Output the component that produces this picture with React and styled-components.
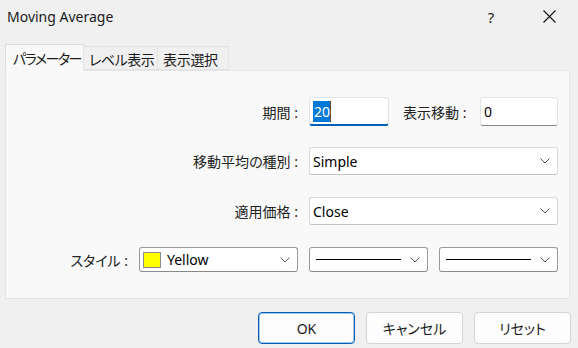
import React from 'react';
import styled, { createGlobalStyle } from 'styled-components';

const GlobalStyle = createGlobalStyle`
  html, body {
    margin: 0;
    padding: 0;
  }
  body {
    width: 578px;
    height: 348px;
    overflow: hidden;
    background: #f0f0f0;
    font-family: "Noto Sans", "Noto Sans CJK JP", sans-serif;
    font-size: 14px;
    color: #222;
    font-feature-settings: "palt";
  }
`;

const Window = styled.div`
  width: 578px;
  height: 348px;
  display: flex;
  flex-direction: column;
  background: #f0f0f0;
`;

const TitleBar = styled.div`
  height: 33px;
  display: flex;
  align-items: center;
  padding-left: 7px;
`;

const Title = styled.div`
  flex: 1;
  font-size: 14px;
  color: #1a1a1a;
`;

const TitleButton = styled.div`
  width: 58px;
  height: 33px;
  display: flex;
  align-items: center;
  justify-content: center;
  font-size: 15px;
  color: #222;
`;

const TabStrip = styled.div`
  display: flex;
  align-items: flex-end;
  margin-top: 11px;
  padding-left: 5px;
  position: relative;
  z-index: 1;
`;

const Tab = styled.div`
  width: ${(p) => p.$w}px;
  height: ${(p) => (p.$active ? 27 : 24)}px;
  box-sizing: border-box;
  display: flex;
  align-items: center;
  padding-left: ${(p) => (p.$active ? 7 : 5)}px;
  padding-top: ${(p) => (p.$active ? 0 : 1)}px;
  background: ${(p) => (p.$active ? '#f9f9f9' : '#f0f0f0')};
  border: 1px solid ${(p) => (p.$active ? '#dcdcdc' : '#e3e3e3')};
  border-bottom: ${(p) => (p.$active ? '1px solid #f9f9f9' : '1px solid #e3e3e3')};
  margin-bottom: ${(p) => (p.$active ? -1 : 0)}px;
  margin-left: ${(p) => (p.$first ? 0 : -1)}px;
  letter-spacing: ${(p) => p.$ls || 0}px;
  white-space: nowrap;
  overflow: hidden;
  color: #1a1a1a;
`;

const Panel = styled.div`
  margin: 0 8px 0 5px;
  height: 229px;
  box-sizing: border-box;
  background: #f9f9f9;
  border: 1px solid #e5e5e5;
  padding-top: 26px;
  display: flex;
  flex-direction: column;
`;

const Row = styled.div`
  display: flex;
  align-items: center;
  gap: 11px;
  margin-top: ${(p) => p.$top || 0}px;
`;

const Label = styled.div`
  width: ${(p) => p.$w}px;
  text-align: right;
  white-space: nowrap;
`;

const InlineLabel = styled.div`
  width: 66px;
  margin-left: 3px;
  white-space: nowrap;
`;

const TextBox = styled.div`
  width: ${(p) => p.$w}px;
  height: 29px;
  box-sizing: border-box;
  background: #fff;
  border: 1px solid #e3e3e3;
  border-bottom: ${(p) => (p.$focus ? '2px solid #005fb8' : '1px solid #8a8a8a')};
  border-radius: 3px;
  display: flex;
  align-items: center;
  padding: 0 0 0 3px;
  padding-top: ${(p) => (p.$focus ? 1 : 0)}px;
  color: #000;
`;

const Selected = styled.span`
  background: #0078d7;
  color: #fff;
  line-height: 21px;
  padding: 0 0 0 1px;
  border-right: 1px solid #6b4a2a;
`;

const Select = styled.div`
  width: ${(p) => p.$w}px;
  height: ${(p) => p.$h || 28}px;
  box-sizing: border-box;
  background: #fff;
  border: 1px solid ${(p) => (p.$dark ? '#9a9a9a' : '#d9d9d9')};
  border-bottom-color: ${(p) => (p.$dark ? '#8a8a8a' : '#c4c4c4')};
  border-radius: 3px;
  display: flex;
  align-items: center;
  padding: 0 7px 0 3px;
  gap: 6px;
  color: #000;
`;

const SelectValue = styled.div`
  flex: 1;
  display: flex;
  align-items: center;
  gap: 6px;
  white-space: nowrap;
`;

const Swatch = styled.div`
  width: 18px;
  height: 16px;
  box-sizing: border-box;
  background: ${(p) => p.$color};
  border: 1px solid #8c8c8c;
`;

const LineSample = styled.div`
  width: 85px;
  height: 1px;
  margin-left: 3px;
  background: #000;
`;

const Footer = styled.div`
  display: flex;
  justify-content: flex-end;
  gap: 11px;
  padding: 13px 7px 0 0;
`;

const Button = styled.div`
  width: 97px;
  height: 32px;
  box-sizing: border-box;
  background: #fdfdfd;
  border: 1px solid ${(p) => (p.$primary ? '#005fb8' : '#d5d5d5')};
  box-shadow: ${(p) => (p.$primary ? 'inset 0 0 0 1px rgba(0, 95, 184, 0.35)' : 'none')};
  border-radius: 4px;
  display: flex;
  align-items: center;
  justify-content: center;
  color: #1a1a1a;
`;

const Chevron = () => (
  <svg width="10" height="6" viewBox="0 0 10 6">
    <path d="M0.5 0.5 L5 5 L9.5 0.5" fill="none" stroke="#5a5a5a" strokeWidth="1" />
  </svg>
);

const CloseIcon = () => (
  <svg width="13" height="13" viewBox="0 0 13 13">
    <path d="M0.5 0.5 L12.5 12.5 M12.5 0.5 L0.5 12.5" stroke="#111" strokeWidth="1.1" />
  </svg>
);

export default function App() {
  return (
    <Window>
      <GlobalStyle />
      <TitleBar>
        <Title>Moving Average</Title>
        <TitleButton>?</TitleButton>
        <TitleButton>
          <CloseIcon />
        </TitleButton>
      </TitleBar>

      <TabStrip>
        <Tab $active $first $w={79} $ls={-1.5}>パラメーター</Tab>
        <Tab $w={75} $ls={-0.5}>レベル表示</Tab>
        <Tab $w={72} $ls={-0.3}>表示選択</Tab>
      </TabStrip>

      <Panel>
        <Row>
          <Label $w={292}>期間 :</Label>
          <TextBox $w={80} $focus>
            <Selected>20</Selected>
          </TextBox>
          <InlineLabel>表示移動 :</InlineLabel>
          <TextBox $w={78}>0</TextBox>
        </Row>

        <Row $top={21}>
          <Label $w={292}>移動平均の種別 :</Label>
          <Select $w={249}>
            <SelectValue>Simple</SelectValue>
            <Chevron />
          </Select>
        </Row>

        <Row $top={22}>
          <Label $w={292}>適用価格 :</Label>
          <Select $w={249}>
            <SelectValue>Close</SelectValue>
            <Chevron />
          </Select>
        </Row>

        <Row $top={22}>
          <Label $w={122}>スタイル :</Label>
          <Select $w={159} $h={25} $dark>
            <SelectValue>
              <Swatch $color="#ffff00" />
              Yellow
            </SelectValue>
            <Chevron />
          </Select>
          <Select $w={119} $h={25} $dark>
            <SelectValue>
              <LineSample />
            </SelectValue>
            <Chevron />
          </Select>
          <Select $w={119} $h={25} $dark>
            <SelectValue>
              <LineSample />
            </SelectValue>
            <Chevron />
          </Select>
        </Row>
      </Panel>

      <Footer>
        <Button $primary>OK</Button>
        <Button>キャンセル</Button>
        <Button>リセット</Button>
      </Footer>
    </Window>
  );
}
